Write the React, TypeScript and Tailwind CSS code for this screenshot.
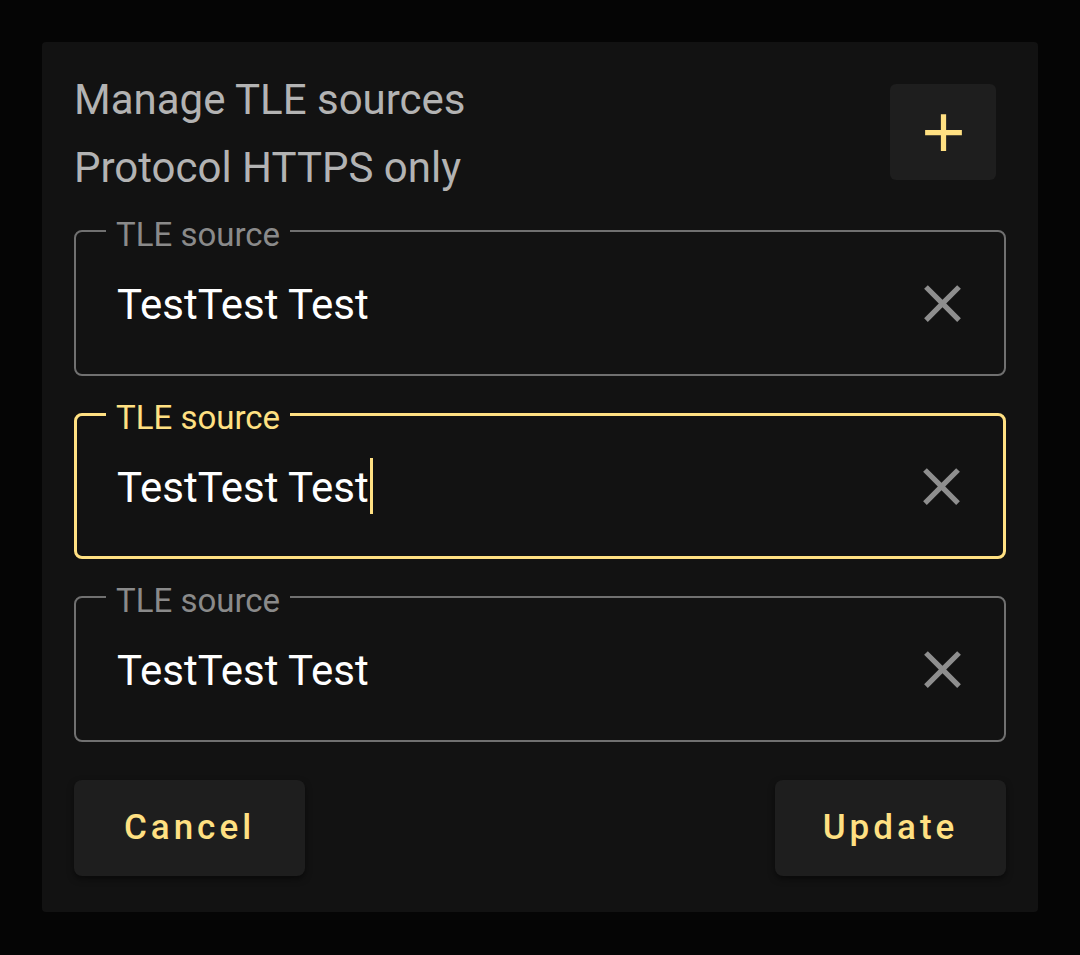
import { useState } from "react";

function ClearIcon() {
  return (
    <svg viewBox="0 0 24 24" className="w-[63px] h-[63px]" fill="#8e8e8e">
      <path d="M19 6.41 17.59 5 12 10.59 6.41 5 5 6.41 10.59 12 5 17.59 6.41 19 12 13.41 17.59 19 19 17.59 13.41 12z" />
    </svg>
  );
}

function SourceField({ value, focused }: { value: string; focused?: boolean }) {
  return (
    <div
      className={`relative h-[146px] rounded-[8px] flex items-center pr-[30px] ${
        focused
          ? "border-[3px] border-[#ffe082] pl-[40px]"
          : "border-2 border-[#707070] pl-[41px]"
      }`}
    >
      <span
        className={`absolute px-[10px] bg-[#121212] text-[33px] leading-[40px] ${
          focused ? "text-[#ffe082] left-[29px] top-[-18px]" : "text-[#8a8a8a] left-[30px] top-[-17px]"
        }`}
      >
        TLE source
      </span>
      <div className="flex-1 flex items-center text-[42px] leading-[50px] text-white">
        <span className="mt-[4px]">{value}</span>
        {focused && <span className="ml-[1px] w-[3px] h-[56px] bg-[#ffe082]" />}
      </div>
      <button className="flex items-center justify-center">
        <ClearIcon />
      </button>
    </div>
  );
}

export default function App() {
  const [sources] = useState(["TestTest Test", "TestTest Test", "TestTest Test"]);

  return (
    <div
      className="min-h-screen bg-[#050505] p-[42px]"
      style={{ fontFamily: "Roboto, 'Noto Sans', sans-serif" }}
    >
      <div className="bg-[#121212] rounded-[4px] px-[32px] pt-[34px] pb-[36px]">
        <div className="flex items-start justify-between">
          <div className="text-[42px] leading-[48px] text-[#b3b3b3]">
            <p>Manage TLE sources</p>
            <p className="mt-[20px]">Protocol HTTPS only</p>
          </div>
          <button className="mt-[8px] mr-[10px] w-[106px] h-[96px] rounded-[6px] bg-[#1e1e1e] flex items-center justify-center">
            <svg viewBox="0 0 24 24" className="w-[63px] h-[63px]" fill="#ffe082">
              <path d="M19 13h-6v6h-2v-6H5v-2h6V5h2v6h6v2z" />
            </svg>
          </button>
        </div>

        <div className="mt-[38px] flex flex-col gap-[37px]">
          {sources.map((s, i) => (
            <SourceField key={i} value={s} focused={i === 1} />
          ))}
        </div>

        <div className="mt-[38px] flex justify-between">
          <button className="w-[231px] h-[96px] rounded-[8px] bg-[#1e1e1e] shadow-[0_3px_6px_rgba(0,0,0,0.5)] text-[#ffe082] text-[35px] font-medium tracking-[4px]">
            Cancel
          </button>
          <button className="w-[231px] h-[96px] rounded-[8px] bg-[#1e1e1e] shadow-[0_3px_6px_rgba(0,0,0,0.5)] text-[#ffe082] text-[35px] font-medium tracking-[4px]">
            Update
          </button>
        </div>
      </div>
    </div>
  );
}
